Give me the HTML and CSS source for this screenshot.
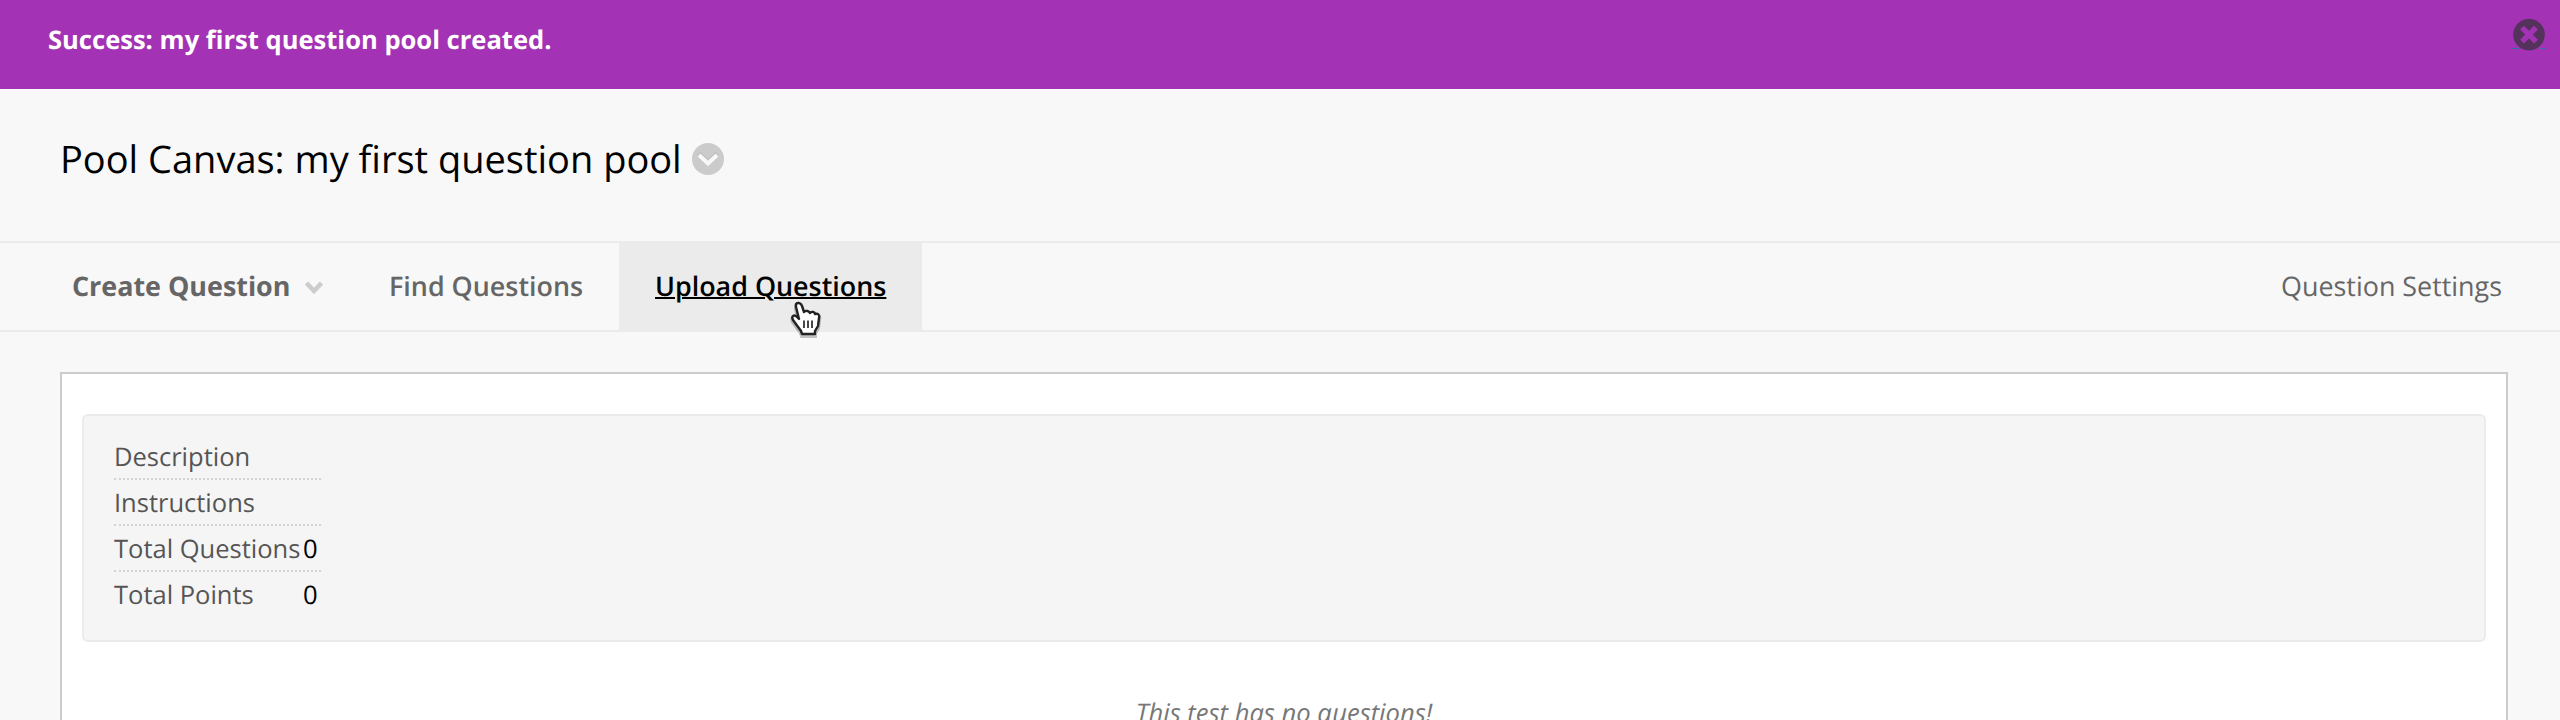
FILE: index.html
```html
<!DOCTYPE html>
<html lang="en">
<head>
<meta charset="utf-8">
<title>Pool Canvas</title>
<link rel="stylesheet" href="styles.css">
</head>
<body>
<div class="banner">
  <span class="banner-text">Success: my first question pool created.</span>
  <a class="close" aria-label="Close"><svg width="34" height="34" viewBox="0 0 34 34"><path d="M0 29.500h7M27 29.500h7" stroke="#2f72a8"/><circle cx="17" cy="15.6" r="15.8" fill="#54325c"/><path d="M10 8.6l14 14M24 8.6l-14 14" stroke="#a333b4" stroke-width="5.4"/></svg></a>
</div>
<header class="title">
  <h1>Pool Canvas: my first question pool</h1>
  <svg class="title-menu" width="32" height="32" viewBox="0 0 32 32"><circle cx="16" cy="16" r="16" fill="#cbcbcb"/><path d="M7 10.500l9 9 9-9" fill="none" stroke="#bcbcbc" stroke-width="4"/><path d="M7 12l9 8.500 9-8.500" fill="none" stroke="#f8f8f8" stroke-width="4"/></svg>
</header>
<nav class="actions">
  <a class="item create"><span class="create-label">Create Question</span><svg width="20" height="16" viewBox="0 0 20 16"><path d="M2.500 3l7.500 8 7.500-8" fill="none" stroke="#cccccc" stroke-width="4.500"/></svg></a>
  <a class="item find">Find Questions</a>
  <a class="item upload"><span class="upload-label">Upload Questions</span>
    <svg class="cursor" width="34" height="40" viewBox="0 0 34 40"><g transform="translate(0 2)" opacity=".22"><path d="M7 3c2-2 5-1 6 2l2 6c2-2 5-1 6 1 2-2 5-1 5 1 3-1 5 1 4 4l-1 8-3 5v3H13l-1-3-8-11c-2-4 1-6 4-3l2 2-3-12z" stroke="#000" stroke-width="4"/></g><path d="M7 3c2-2 5-1 6 2l2 6c2-2 5-1 6 1 2-2 5-1 5 1 3-1 5 1 4 4l-1 8-3 5v3H13l-1-3-8-11c-2-4 1-6 4-3l2 2-3-12z" fill="#fff" stroke="#222" stroke-width="2.4" stroke-linejoin="round"/><path d="M15 19.500v7.500M19 19.500v7.500M23 19.500v7.500" stroke="#333" stroke-width="1.800"/></svg>
  </a>
  <a class="item settings">Question Settings</a>
</nav>
<main class="canvas">
  <section class="details">
    <dl>
      <div class="row"><dt>Description</dt><dd></dd></div>
      <div class="row"><dt>Instructions</dt><dd></dd></div>
      <div class="row"><dt>Total Questions</dt><dd>0</dd></div>
      <div class="row"><dt>Total Points</dt><dd>0</dd></div>
    </dl>
  </section>
  <p class="empty">This test has no questions!</p>
</main>
</body>
</html>
```
FILE: styles.css
```css
* { box-sizing: border-box; }
html, body { height: 100%; overflow: hidden; }
body {
  margin: 0;
  display: flex;
  flex-direction: column;
  background: #f8f8f8;
  color: #000;
  font-family: "Open Sans", "Noto Sans", sans-serif;
  font-size: 25.6px;
  white-space: nowrap;
  text-rendering: geometricPrecision;
}
.banner {
  flex: none;
  display: flex;
  justify-content: space-between;
  align-items: flex-start;
  height: 89px;
  padding: 19px 14px 0 48px;
  background: #a333b4;
  color: #fff;
  font-size: 25.55px;
  font-weight: 700;
  line-height: 42px;
}
.close { display: flex; }
.close svg { display: block; }
.title {
  flex: none;
  display: flex;
  align-items: flex-start;
  height: 152px;
  padding: 39px 0 0 60px;
}
.title h1 { margin: 0; width: 632px; font-size: 38px; font-weight: 400; line-height: 62px; }
.title-menu { margin-top: 15px; }
.actions {
  flex: none;
  display: flex;
  height: 91px;
  padding-left: 36px;
  border-top: 2px solid #ebebeb;
  border-bottom: 2px solid #ebebeb;
  color: #666;
  font-size: 26.88px;
  line-height: 86px;
}
.item { display: block; flex: none; padding: 0 36px; }
.create { display: flex; align-items: flex-start; width: 316px; padding-right: 0; font-weight: 700; }
.create svg { margin-top: 37px; }
.create-label { width: 232px; }
.find { width: 267px; padding-left: 37px; font-weight: 600; }
.upload {
  position: relative;
  width: 303px;
  background: #ebebeb;
  box-shadow: 0 2px #ebebeb;
  color: #000;
  font-weight: 600;
}
.upload-label { text-decoration: underline; text-decoration-thickness: 2px; }
.cursor { position: absolute; left: 170px; top: 58px; }
.settings { margin-left: auto; padding-right: 58px; }
.canvas {
  flex: 1 0 auto;
  margin: 40px 52px 0 60px;
  padding: 40px 20px 0;
  border: 2px solid #ccc;
  border-bottom: 0;
  background: #fff;
}
.details {
  height: 228px;
  padding: 18px 30px;
  border: 2px solid #ebebeb;
  border-radius: 6px;
  background: #f5f5f5;
}
dl { margin: 0; width: 207px; }
.row { display: flex; justify-content: space-between; height: 46px; line-height: 46px; border-bottom: 2px dotted #d2d2d2; }
.row:last-child { border-bottom: 0; }
dt { color: #555; font-size: 25.5px; }
dd { width: 18px; margin: 0; }
.empty { margin: 51px 0 0; color: #777; font-style: italic; line-height: 40px; text-align: center; }
```
